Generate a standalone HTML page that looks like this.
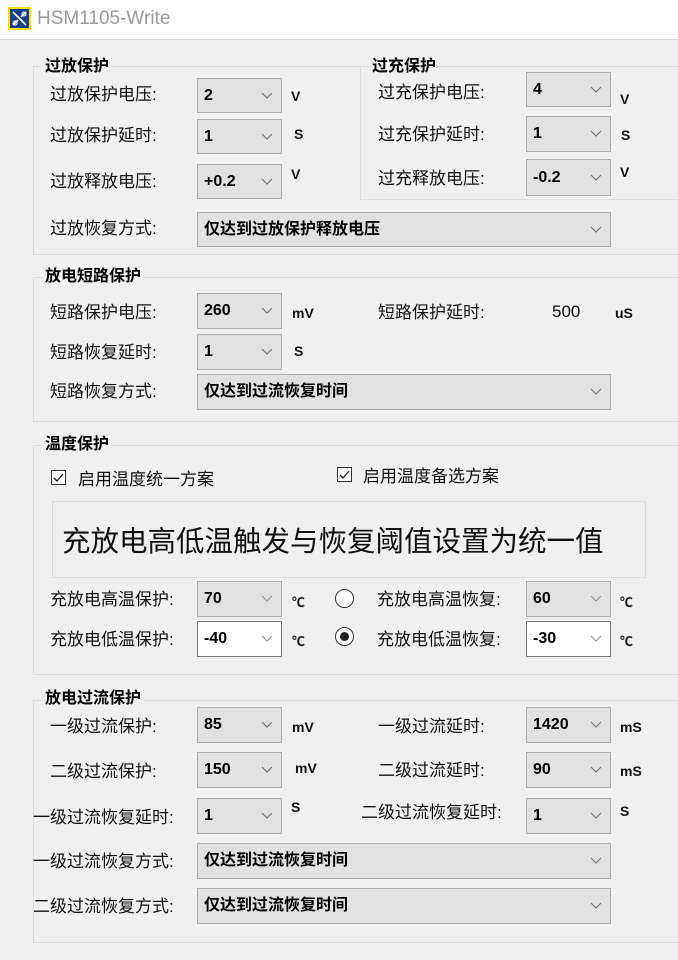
<!DOCTYPE html>
<html><head><meta charset="utf-8"><style>
*{margin:0;padding:0;box-sizing:border-box}
body{width:678px;height:960px;background:#f0f0f0;position:relative;overflow:hidden;font-family:"Liberation Sans","Noto Sans CJK SC",sans-serif;color:#000}
.a{position:absolute;white-space:nowrap}
.tb{position:absolute;left:0;top:0;width:678px;height:40px;background:#fff;border-bottom:1px solid #d9d9d9}
.g{position:absolute;border:1px solid #dcdcdc;}
.gt{position:absolute;font-size:16px;font-weight:bold;background:#f0f0f0;padding:0 2px;line-height:18px}
.l{position:absolute;font-size:17px;white-space:nowrap;line-height:20px;color:#111}
.c{position:absolute;border:1px solid #adadad;background:#e1e1e1;font-size:16px;font-weight:bold;padding-left:6px;white-space:nowrap}
.c.w{background:#fff;border-color:#7a7a7a}
.c svg{position:absolute;right:8px;top:50%;margin-top:-4px}
.u{position:absolute;font-size:14px;font-weight:bold;color:#111}
.cb{position:absolute;width:15px;height:15px;border:1px solid #333;background:#fff}
</style></head><body>
<div class="tb"></div>
<div class="a" style="left:8px;top:7px;width:23px;height:23px;background:#ffe000;"><svg width="23" height="23"><rect x="2" y="2" width="19" height="19" fill="#1b3f8f"/><path d="M5 5 L18 18 M5 18 L10 13 M13 10 L18 5" stroke="#fff" stroke-width="1.6"/><circle cx="7" cy="16" r="2" fill="none" stroke="#fff"/><circle cx="16" cy="7" r="2" fill="none" stroke="#fff"/></svg></div>
<div class="a" style="left:37px;top:8px;font-size:19px;color:#999">HSM1105-Write</div>

<div class="g" style="left:33px;top:66px;width:700px;height:189px"></div>
<div class="gt" style="left:43px;top:58px">过放保护</div>
<div class="g" style="left:360px;top:66px;width:400px;height:134px;background:#f0f0f0"></div>
<div class="gt" style="left:370px;top:58px">过充保护</div>
<div class="g" style="left:33px;top:277px;width:700px;height:145px"></div>
<div class="gt" style="left:43px;top:268px">放电短路保护</div>
<div class="g" style="left:33px;top:445px;width:700px;height:230px"></div>
<div class="gt" style="left:43px;top:436px">温度保护</div>
<div class="g" style="left:33px;top:700px;width:700px;height:243px"></div>
<div class="gt" style="left:43px;top:690px">放电过流保护</div>

<div class="l" style="left:50px;top:85px">过放保护电压:</div>
<div class="c" style="left:197px;top:78px;width:85px;height:35px;line-height:33px">2<svg width="12" height="8"><path d="M1 1 L6 6 L11 1" fill="none" stroke="#777" stroke-width="1.2"/></svg></div>
<div class="u" style="left:291px;top:88px">V</div>
<div class="l" style="left:50px;top:126px">过放保护延时:</div>
<div class="c" style="left:197px;top:119px;width:85px;height:35px;line-height:33px">1<svg width="12" height="8"><path d="M1 1 L6 6 L11 1" fill="none" stroke="#777" stroke-width="1.2"/></svg></div>
<div class="u" style="left:294px;top:126px">S</div>
<div class="l" style="left:50px;top:172px">过放释放电压:</div>
<div class="c" style="left:197px;top:164px;width:85px;height:35px;line-height:33px">+0.2<svg width="12" height="8"><path d="M1 1 L6 6 L11 1" fill="none" stroke="#777" stroke-width="1.2"/></svg></div>
<div class="u" style="left:291px;top:166px">V</div>
<div class="l" style="left:50px;top:219px">过放恢复方式:</div>
<div class="c" style="left:197px;top:212px;width:414px;height:35px;line-height:33px">仅达到过放保护释放电压<svg width="12" height="8"><path d="M1 1 L6 6 L11 1" fill="none" stroke="#777" stroke-width="1.2"/></svg></div>

<div class="l" style="left:378px;top:83px">过充保护电压:</div>
<div class="c" style="left:526px;top:72px;width:85px;height:35px;line-height:33px">4<svg width="12" height="8"><path d="M1 1 L6 6 L11 1" fill="none" stroke="#777" stroke-width="1.2"/></svg></div>
<div class="u" style="left:620px;top:91px">V</div>
<div class="l" style="left:378px;top:125px">过充保护延时:</div>
<div class="c" style="left:526px;top:116px;width:85px;height:36px;line-height:34px">1<svg width="12" height="8"><path d="M1 1 L6 6 L11 1" fill="none" stroke="#777" stroke-width="1.2"/></svg></div>
<div class="u" style="left:621px;top:127px">S</div>
<div class="l" style="left:378px;top:169px">过充释放电压:</div>
<div class="c" style="left:526px;top:159px;width:85px;height:37px;line-height:35px">-0.2<svg width="12" height="8"><path d="M1 1 L6 6 L11 1" fill="none" stroke="#777" stroke-width="1.2"/></svg></div>
<div class="u" style="left:620px;top:164px">V</div>

<div class="l" style="left:50px;top:303px">短路保护电压:</div>
<div class="c" style="left:197px;top:293px;width:85px;height:36px;line-height:34px">260<svg width="12" height="8"><path d="M1 1 L6 6 L11 1" fill="none" stroke="#777" stroke-width="1.2"/></svg></div>
<div class="u" style="left:292px;top:305px">mV</div>
<div class="l" style="left:378px;top:303px">短路保护延时:</div>
<div class="a" style="left:552px;top:302px;font-size:17px;color:#111">500</div>
<div class="u" style="left:615px;top:305px">uS</div>
<div class="l" style="left:50px;top:343px">短路恢复延时:</div>
<div class="c" style="left:197px;top:334px;width:85px;height:36px;line-height:34px">1<svg width="12" height="8"><path d="M1 1 L6 6 L11 1" fill="none" stroke="#777" stroke-width="1.2"/></svg></div>
<div class="u" style="left:294px;top:343px">S</div>
<div class="l" style="left:50px;top:382px">短路恢复方式:</div>
<div class="c" style="left:197px;top:374px;width:414px;height:36px;line-height:34px">仅达到过流恢复时间<svg width="12" height="8"><path d="M1 1 L6 6 L11 1" fill="none" stroke="#777" stroke-width="1.2"/></svg></div>

<div class="cb" style="left:51px;top:470px"><svg width="13" height="13"><path d="M2 7 L5 10 L11 3" fill="none" stroke="#222" stroke-width="1.3"/></svg></div>
<div class="l" style="left:78px;top:470px">启用温度统一方案</div>
<div class="cb" style="left:337px;top:467px"><svg width="13" height="13"><path d="M2 7 L5 10 L11 3" fill="none" stroke="#222" stroke-width="1.3"/></svg></div>
<div class="l" style="left:363px;top:467px">启用温度备选方案</div>
<div class="a" style="left:52px;top:501px;width:594px;height:77px;border:1px solid #dcdcdc"></div>
<div class="a" style="left:62px;top:519px;font-size:28.5px;color:#111">充放电高低温触发与恢复阈值设置为统一值</div>
<div class="l" style="left:50px;top:590px">充放电高温保护:</div>
<div class="c" style="left:197px;top:581px;width:85px;height:36px;line-height:34px">70<svg width="12" height="8"><path d="M1 1 L6 6 L11 1" fill="none" stroke="#999" stroke-width="1.2"/></svg></div>
<div class="u" style="left:292px;top:592px;font-size:13px">℃</div>
<div class="a" style="left:335px;top:589px;width:19px;height:19px;border:1px solid #333;border-radius:50%;background:#fff"></div>
<div class="l" style="left:377px;top:590px">充放电高温恢复:</div>
<div class="c" style="left:526px;top:581px;width:85px;height:36px;line-height:34px">60<svg width="12" height="8"><path d="M1 1 L6 6 L11 1" fill="none" stroke="#999" stroke-width="1.2"/></svg></div>
<div class="u" style="left:620px;top:592px;font-size:13px">℃</div>
<div class="l" style="left:50px;top:630px">充放电低温保护:</div>
<div class="c w" style="left:197px;top:621px;width:85px;height:36px;line-height:34px">-40<svg width="12" height="8"><path d="M1 1 L6 6 L11 1" fill="none" stroke="#999" stroke-width="1.2"/></svg></div>
<div class="u" style="left:292px;top:631px;font-size:13px">℃</div>
<div class="a" style="left:335px;top:627px;width:19px;height:19px;border:1px solid #333;border-radius:50%;background:#fff"><div style="position:absolute;left:4px;top:4px;width:9px;height:9px;border-radius:50%;background:#222"></div></div>
<div class="l" style="left:377px;top:630px">充放电低温恢复:</div>
<div class="c w" style="left:526px;top:621px;width:85px;height:36px;line-height:34px">-30<svg width="12" height="8"><path d="M1 1 L6 6 L11 1" fill="none" stroke="#999" stroke-width="1.2"/></svg></div>
<div class="u" style="left:620px;top:631px;font-size:13px">℃</div>

<div class="l" style="left:50px;top:717px">一级过流保护:</div>
<div class="c" style="left:197px;top:707px;width:85px;height:36px;line-height:34px">85<svg width="12" height="8"><path d="M1 1 L6 6 L11 1" fill="none" stroke="#777" stroke-width="1.2"/></svg></div>
<div class="u" style="left:292px;top:719px">mV</div>
<div class="l" style="left:378px;top:717px">一级过流延时:</div>
<div class="c" style="left:526px;top:707px;width:85px;height:36px;line-height:34px">1420<svg width="12" height="8"><path d="M1 1 L6 6 L11 1" fill="none" stroke="#777" stroke-width="1.2"/></svg></div>
<div class="u" style="left:620px;top:719px">mS</div>
<div class="l" style="left:50px;top:762px">二级过流保护:</div>
<div class="c" style="left:197px;top:752px;width:85px;height:36px;line-height:34px">150<svg width="12" height="8"><path d="M1 1 L6 6 L11 1" fill="none" stroke="#777" stroke-width="1.2"/></svg></div>
<div class="u" style="left:295px;top:760px">mV</div>
<div class="l" style="left:378px;top:761px">二级过流延时:</div>
<div class="c" style="left:526px;top:752px;width:85px;height:36px;line-height:34px">90<svg width="12" height="8"><path d="M1 1 L6 6 L11 1" fill="none" stroke="#777" stroke-width="1.2"/></svg></div>
<div class="u" style="left:620px;top:763px">mS</div>
<div class="l" style="left:33px;top:808px">一级过流恢复延时:</div>
<div class="c" style="left:197px;top:798px;width:85px;height:36px;line-height:34px">1<svg width="12" height="8"><path d="M1 1 L6 6 L11 1" fill="none" stroke="#777" stroke-width="1.2"/></svg></div>
<div class="u" style="left:291px;top:799px">S</div>
<div class="l" style="left:361px;top:803px">二级过流恢复延时:</div>
<div class="c" style="left:526px;top:798px;width:85px;height:36px;line-height:34px">1<svg width="12" height="8"><path d="M1 1 L6 6 L11 1" fill="none" stroke="#777" stroke-width="1.2"/></svg></div>
<div class="u" style="left:620px;top:803px">S</div>
<div class="l" style="left:33px;top:852px">一级过流恢复方式:</div>
<div class="c" style="left:197px;top:843px;width:414px;height:36px;line-height:34px">仅达到过流恢复时间<svg width="12" height="8"><path d="M1 1 L6 6 L11 1" fill="none" stroke="#777" stroke-width="1.2"/></svg></div>
<div class="l" style="left:33px;top:897px">二级过流恢复方式:</div>
<div class="c" style="left:197px;top:888px;width:414px;height:36px;line-height:34px">仅达到过流恢复时间<svg width="12" height="8"><path d="M1 1 L6 6 L11 1" fill="none" stroke="#777" stroke-width="1.2"/></svg></div>
</body></html>
